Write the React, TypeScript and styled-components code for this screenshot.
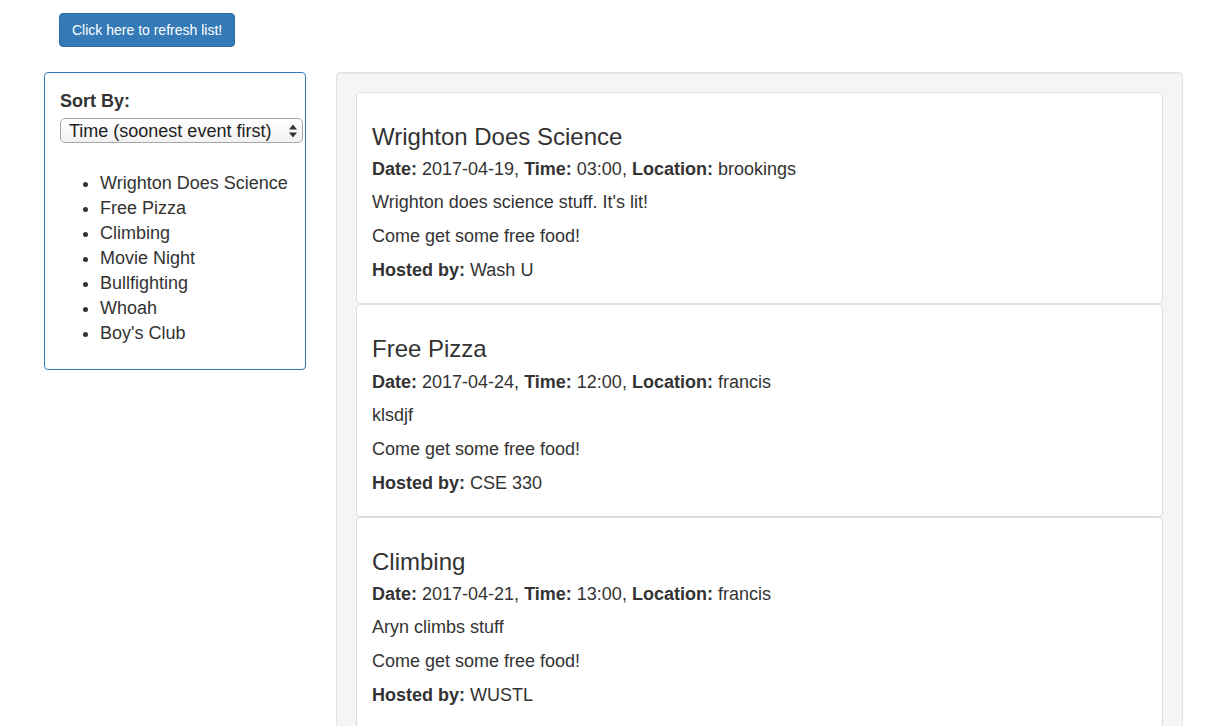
import React from "react";
import styled, { createGlobalStyle } from "styled-components";

const GlobalStyle = createGlobalStyle`
  html, body {
    margin: 0;
    padding: 0;
    overflow: hidden;
    background: #ffffff;
  }
  body {
    font-family: "Liberation Sans", Arial, Helvetica, sans-serif;
    color: #333333;
    font-size: 18px;
    line-height: 24px;
  }
  * { box-sizing: border-box; }
`;

const Page = styled.div`
  padding: 13px 40px 0 44px;
`;

const TopBar = styled.div`
  padding-left: 15px;
  margin-bottom: 25px;
`;

const RefreshButton = styled.button`
  font-family: "Liberation Sans", Arial, sans-serif;
  font-size: 14px;
  line-height: 20px;
  padding: 6px 12px;
  height: 34px;
  color: #ffffff;
  background: #337ab7;
  border: 1px solid #2e6da4;
  border-radius: 4px;
  cursor: pointer;
  -webkit-font-smoothing: antialiased;
`;

const Columns = styled.div`
  display: grid;
  grid-template-columns: 262px 1fr;
  column-gap: 30px;
  align-items: start;
`;

const Sidebar = styled.aside`
  border: 1px solid #337ab7;
  border-radius: 4px;
  padding: 16px 15px 15px;
`;

const SortLabel = styled.label`
  display: block;
  font-weight: bold;
  margin-bottom: 5px;
`;

const SelectWrap = styled.div`
  position: relative;
  width: 243px;
  height: 25px;
`;

const Select = styled.select`
  appearance: none;
  -webkit-appearance: none;
  width: 100%;
  height: 25px;
  font-family: "Liberation Sans", Arial, sans-serif;
  font-size: 18px;
  color: #222;
  padding: 0 20px 0 8px;
  border: 1px solid #a6a6a6;
  border-radius: 5px;
  background: linear-gradient(#ffffff, #f1f1f1);
`;

const SelectArrows = styled.svg`
  position: absolute;
  right: 5px;
  top: 6px;
  pointer-events: none;
`;

const EventNames = styled.ul`
  margin: 28px 0 8px;
  padding-left: 40px;
  line-height: 25px;
`;

const Well = styled.main`
  background: #f5f5f5;
  border: 1px solid #e3e3e3;
  border-radius: 4px;
  padding: 19px;
  box-shadow: inset 0 1px 1px rgba(0, 0, 0, 0.05);
  min-height: 700px;
`;

const Card = styled.section`
  background: #ffffff;
  border: 1px solid #dddddd;
  border-radius: 4px;
  padding: 0 15px 11px;
`;

const Title = styled.h3`
  font-size: 24px;
  font-weight: 500;
  line-height: 26.4px;
  margin: 31px 0 7px;
`;

const Para = styled.p<{ $tight?: boolean }>`
  margin: 0 0 ${(p) => (p.$tight ? "9px" : "10px")};
  line-height: 24px;
`;

type Ev = {
  title: string;
  date: string;
  time: string;
  location: string;
  desc: string;
  host: string;
};

const events: Ev[] = [
  {
    title: "Wrighton Does Science",
    date: "2017-04-19",
    time: "03:00",
    location: "brookings",
    desc: "Wrighton does science stuff. It's lit!",
    host: "Wash U",
  },
  {
    title: "Free Pizza",
    date: "2017-04-24",
    time: "12:00",
    location: "francis",
    desc: "klsdjf",
    host: "CSE 330",
  },
  {
    title: "Climbing",
    date: "2017-04-21",
    time: "13:00",
    location: "francis",
    desc: "Aryn climbs stuff",
    host: "WUSTL",
  },
];

const names = [
  "Wrighton Does Science",
  "Free Pizza",
  "Climbing",
  "Movie Night",
  "Bullfighting",
  "Whoah",
  "Boy's Club",
];

export default function App() {
  return (
    <>
      <GlobalStyle />
      <Page>
        <TopBar>
          <RefreshButton>Click here to refresh list!</RefreshButton>
        </TopBar>
        <Columns>
          <Sidebar>
            <SortLabel>Sort By:</SortLabel>
            <SelectWrap>
              <Select defaultValue="time">
                <option value="time">Time (soonest event first)</option>
                <option value="name">Name</option>
              </Select>
              <SelectArrows width="10" height="14" viewBox="0 0 10 14">
                <path d="M5 0.5 L9 5.5 L1 5.5 Z" fill="#333" />
                <path d="M5 13.5 L9 8.5 L1 8.5 Z" fill="#333" />
              </SelectArrows>
            </SelectWrap>
            <EventNames>
              {names.map((n) => (
                <li key={n}>{n}</li>
              ))}
            </EventNames>
          </Sidebar>
          <Well>
            {events.map((e) => (
              <Card key={e.title}>
                <Title>{e.title}</Title>
                <Para $tight>
                  <b>Date:</b> {e.date}, <b>Time:</b> {e.time},{" "}
                  <b>Location:</b> {e.location}
                </Para>
                <Para>{e.desc}</Para>
                <Para>Come get some free food!</Para>
                <Para>
                  <b>Hosted by:</b> {e.host}
                </Para>
              </Card>
            ))}
          </Well>
        </Columns>
      </Page>
    </>
  );
}
